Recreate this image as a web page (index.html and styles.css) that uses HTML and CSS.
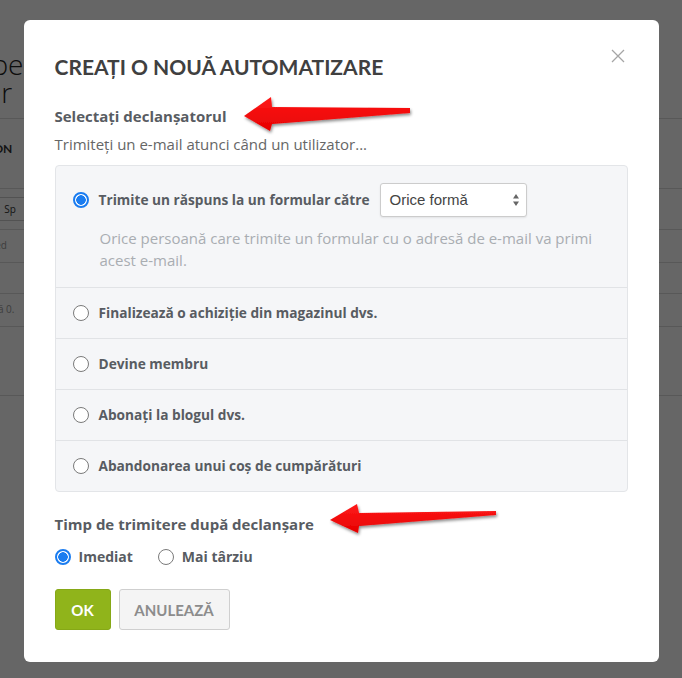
FILE: index.html
```html
<!DOCTYPE html>
<html lang="ro">
<head>
	<meta charset="UTF-8">
	<title>Creați o nouă automatizare</title>
	<link rel="stylesheet" href="styles.css">
</head>
<body>
<div class="page">
	<h1 class="page-title">Ope<br>Tur</h1>
	<div class="page-tab">ACȚIUNI ON</div>
	<div class="page-filter">
		<span class="filter-label">Afișează tipo</span>
		<span class="filter-select">Sp</span>
	</div>
	<div class="page-row">0 selected</div>
	<div class="page-row empty"></div>
	<div class="page-row">Nu există 0.</div>
	<div class="page-row tall"></div>
</div>
<div class="backdrop"></div>
<div class="modal-wrap">
	<div class="modal">
		<svg class="close" width="14" height="14" viewBox="0 0 14 14"><path d="M1 1L13 13M13 1L1 13" stroke="#a5a5a5" stroke-width="1.3" fill="none"/></svg>
		<h2 class="modal-title">CREAȚI O NOUĂ AUTOMATIZARE</h2>
		<h3 class="section-title">Selectați declanșatorul</h3>
		<p class="section-hint">Trimiteți un e-mail atunci când un utilizator...</p>
		<ul class="triggers">
			<li class="trigger first">
				<div class="trigger-head">
					<span class="radio checked"></span>
					<span class="trigger-label">Trimite un răspuns la un formular către</span>
					<div class="select">
						<span>Orice formă</span>
						<svg width="8" height="14" viewBox="0 0 8 14"><path d="M4 1L7 5.5H1Z M4 13L7 8.5H1Z" fill="#666"/></svg>
					</div>
				</div>
				<p class="trigger-desc">Orice persoană care trimite un formular cu o adresă de e-mail va primi acest e-mail.</p>
			</li>
			<li class="trigger"><span class="radio"></span><span class="trigger-label">Finalizează o achiziție din magazinul dvs.</span></li>
			<li class="trigger"><span class="radio"></span><span class="trigger-label">Devine membru</span></li>
			<li class="trigger"><span class="radio"></span><span class="trigger-label">Abonați la blogul dvs.</span></li>
			<li class="trigger"><span class="radio"></span><span class="trigger-label">Abandonarea unui coș de cumpărături</span></li>
		</ul>
		<h3 class="section-title timing">Timp de trimitere după declanșare</h3>
		<div class="timing-options">
			<label class="option"><span class="radio checked"></span>Imediat</label>
			<label class="option"><span class="radio"></span>Mai târziu</label>
		</div>
		<div class="actions">
			<button class="btn btn-ok">OK</button>
			<button class="btn btn-cancel">ANULEAZĂ</button>
		</div>
	</div>
</div>
<svg class="arrows" width="682" height="678" viewBox="0 0 682 678">
	<defs>
		<linearGradient id="red" x1="0" y1="0" x2="0" y2="1">
			<stop offset="0" stop-color="#ff1a1a"/>
			<stop offset="1" stop-color="#e60000"/>
		</linearGradient>
		<filter id="shadow" x="-10%" y="-30%" width="120%" height="180%">
			<feDropShadow dx="1" dy="2" stdDeviation="1.5" flood-color="#000" flood-opacity="0.45"/>
		</filter>
	</defs>
	<polygon points="244,116 271,97 272,107 410,108 410,113 272,124 270,131" fill="url(#red)" filter="url(#shadow)"/>
	<polygon points="330,520 357,504 359,513 496,511 496,515 359,526 358,533" fill="url(#red)" filter="url(#shadow)"/>
</svg>
</body>
</html>
```

FILE: styles.css
```css
html, body {
	margin: 0;
	padding: 0;
}
body {
	background: #fff;
	font-family: "Open Sans", "Liberation Sans", sans-serif;
	color: #555;
	height: 678px;
	overflow: hidden;
}

/* page behind the dialog */
.page {
	margin-left: -30px;
	padding-top: 50px;
	background: #fff;
	height: 560px;
}
.page-title {
	margin: 0;
	font-weight: 300;
	font-size: 28px;
	line-height: 28px;
	color: #222;
	padding-bottom: 12px;
	border-bottom: 1px solid #ddd;
}
.page-tab {
	font-family: Lato, sans-serif;
	font-weight: bold;
	font-size: 12px;
	color: #333;
	margin-left: -28px;
	padding: 22px 0 32px;
}
.page-filter {
	border-top: 1px solid #ddd;
	border-bottom: 1px solid #ddd;
	padding: 8px 0;
	display: flex;
	align-items: center;
	gap: 5px;
	font-size: 10px;
	font-weight: bold;
	color: #333;
	margin-left: -40px;
}
.filter-select {
	border: 1px solid #ccc;
	padding: 4px;
	font-weight: normal;
	width: 40px;
}
.page-row {
	border-bottom: 1px solid #ddd;
	font-size: 10px;
	color: #999;
	padding: 8px 0;
	margin-left: -10px;
	height: 16px;
}
.page-row.empty {
	height: 14px;
}
.page-row.tall {
	height: 52px;
}

.backdrop {
	position: fixed;
	inset: 0;
	background: rgba(0, 0, 0, 0.6);
}

/* dialog */
.modal-wrap {
	position: fixed;
	inset: 0;
	display: flex;
	justify-content: center;
	align-items: flex-start;
	padding-top: 20px;
}
.modal {
	position: relative;
	width: 635px;
	box-sizing: border-box;
	background: #fff;
	border-radius: 6px;
	padding: 33px 31px 32px 31px;
}
.close {
	position: absolute;
	top: 29px;
	right: 34px;
}
.modal-title {
	margin: 0;
	font-family: Lato, sans-serif;
	font-weight: bold;
	font-size: 21px;
	line-height: 28px;
	color: #404040;
}
.section-title {
	margin: 24px 0 0;
	font-size: 15px;
	line-height: 22px;
	font-weight: bold;
	color: #585c62;
}
.section-hint {
	margin: 6px 0 0;
	font-size: 15px;
	line-height: 22px;
	color: #666;
}
.triggers {
	list-style: none;
	margin: 10px 0 0;
	padding: 0;
	background: #f5f6f8;
	border: 1px solid #e3e5e8;
	border-radius: 4px;
}
.trigger {
	display: flex;
	align-items: center;
	gap: 10px;
	padding: 14px 17px;
	border-top: 1px solid #e1e3e6;
	font-size: 15px;
	line-height: 22px;
}
.trigger.first {
	display: block;
	border-top: none;
	padding: 17px 17px 16px;
}
.trigger-head {
	display: flex;
	align-items: center;
	gap: 10px;
}
.trigger-label {
	font-size: 13.7px;
	font-weight: bold;
	color: #585c62;
}
.select {
	width: 147px;
	height: 34px;
	box-sizing: border-box;
	background: #fff;
	border: 1px solid #ccc;
	border-radius: 3px;
	box-shadow: 0 1px 2px rgba(0, 0, 0, 0.08);
	display: flex;
	align-items: center;
	justify-content: space-between;
	padding: 0 6px 0 9px;
	font-family: "Liberation Sans", Arial, sans-serif;
	color: #444;
}
.trigger-desc {
	margin: 10px 0 0 27px;
	max-width: 500px;
	color: #a9adb2;
}
.radio {
	width: 16px;
	height: 16px;
	box-sizing: border-box;
	border: 1px solid #7a7a7a;
	border-radius: 50%;
	background: #fff;
	flex: none;
}
.radio.checked {
	border: 2px solid #1a7cf0;
	background: radial-gradient(circle, #1a7cf0 0, #1a7cf0 4.5px, #fff 5px);
}
.section-title.timing {
	margin-top: 21px;
}
.timing-options {
	margin-top: 11px;
	display: flex;
	gap: 25px;
}
.option {
	display: flex;
	align-items: center;
	gap: 8px;
	font-size: 14px;
	line-height: 22px;
	font-weight: bold;
	color: #585c62;
}
.actions {
	margin-top: 21px;
	display: flex;
	gap: 8px;
}
.btn {
	height: 41px;
	border-radius: 3px;
	font-family: Lato, sans-serif;
	font-weight: bold;
	font-size: 15px;
	padding: 0;
	cursor: pointer;
}
.btn-ok {
	width: 56px;
	background: #90b41b;
	border: 1px solid #86a817;
	color: #fff;
}
.btn-cancel {
	width: 111px;
	background: #f4f4f4;
	border: 1px solid #cfcfcf;
	color: #8c8c8c;
}

.arrows {
	position: fixed;
	top: 0;
	left: 0;
	pointer-events: none;
}
```
